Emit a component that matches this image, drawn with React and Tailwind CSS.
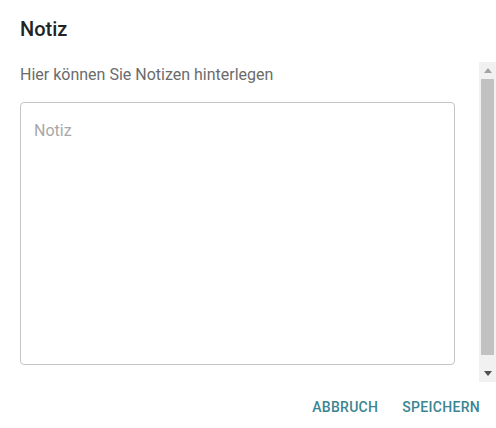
import React from 'react';

export default function App() {
  return <div className="w-[496px] h-[428px] bg-white flex flex-col font-['Roboto',sans-serif] overflow-hidden">
      <div className="h-[62px] pl-5 pt-[13px]">
        <h2 className="text-[20px] leading-[32px] font-medium text-[#232323]">Notiz</h2>
      </div>
      <div className="h-[320px] flex">
        <div className="flex-1 pl-5 pr-[24px] pt-[1px]">
          <p className="text-[16px] leading-[24px] text-[#6b6b6b]">Hier können Sie Notizen hinterlegen</p>
          <div className="mt-[15px] h-[263px] border border-[#c4c4c4] rounded-[4px] px-[13px] pt-[16px]">
            <textarea className="w-full h-full resize-none outline-none text-[16px] leading-[24px] text-[#1f1f1f] placeholder:text-[#a8a8a8] font-['Roboto',sans-serif]" placeholder="Notiz" />
          </div>
        </div>
        <div className="w-[17px] bg-[#f1f1f1] flex flex-col items-center">
          <div className="h-[17px] w-full flex items-center justify-center">
            <svg width="8" height="5" viewBox="0 0 8 5"><path d="M0 5 L4 0 L8 5 Z" fill="#a3a3a3" /></svg>
          </div>
          <div className="w-[13px] h-[276px] bg-[#c1c1c1]" />
          <div className="flex-1" />
          <div className="h-[17px] w-full flex items-center justify-center">
            <svg width="8" height="5" viewBox="0 0 8 5"><path d="M0 0 L4 5 L8 0 Z" fill="#505050" /></svg>
          </div>
        </div>
      </div>
      <div className="flex justify-end items-center gap-2 pr-2 pt-[7px]">
        <button className="h-[36px] px-2 text-[14px] font-medium tracking-[0.3px] text-[#3b8592] uppercase">Abbruch</button>
        <button className="h-[36px] px-2 text-[14px] font-medium tracking-[0.3px] text-[#3b8592] uppercase">Speichern</button>
      </div>
    </div>;
}
